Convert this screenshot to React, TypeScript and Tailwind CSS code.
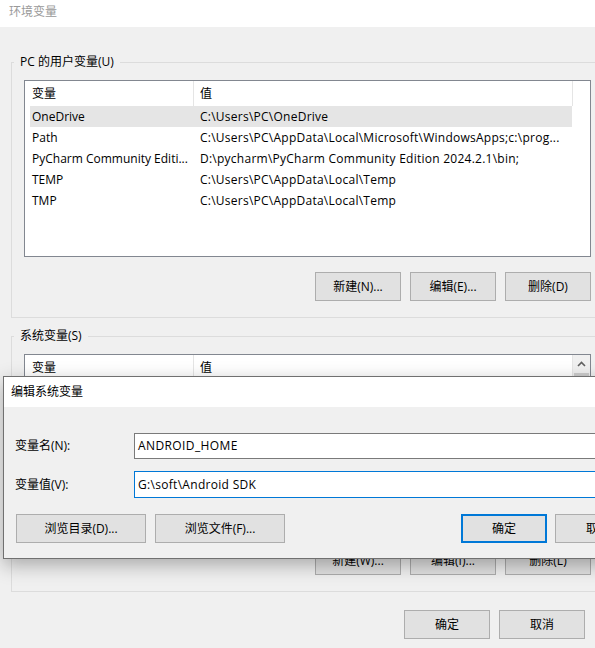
const rows = [
  ["OneDrive", "C:\\Users\\PC\\OneDrive"],
  ["Path", "C:\\Users\\PC\\AppData\\Local\\Microsoft\\WindowsApps;c:\\prog..."],
  ["PyCharm Community Editi...", "D:\\pycharm\\PyCharm Community Edition 2024.2.1\\bin;"],
  ["TEMP", "C:\\Users\\PC\\AppData\\Local\\Temp"],
  ["TMP", "C:\\Users\\PC\\AppData\\Local\\Temp"],
];

const Btn = ({ label, wide = false, focus = false }: { label: string; wide?: boolean; focus?: boolean }) => (
  <div
    className={`flex h-[29px] items-center justify-center bg-[#e1e1e1] text-[12px] text-black ${
      wide ? "w-[130px]" : "w-[86px]"
    } ${focus ? "border-2 border-[#0078d7]" : "border border-[#adadad]"}`}
  >
    {label}
  </div>
);

const Header = () => (
  <div className="flex h-[25px] w-[548px] bg-white text-[12px]">
    <div className="flex w-[169px] items-center border-r border-[#e5e5e5] pl-[7px]">变量</div>
    <div className="flex flex-1 items-center border-r border-[#e5e5e5] pl-[6px]">值</div>
  </div>
);

const App = () => {
  return (
    <div className="relative h-[648px] w-[595px] overflow-hidden bg-[#f0f0f0] font-['Open_Sans','Noto_Sans_CJK_SC',sans-serif] text-[12px] text-black">
      {/* main window */}
      <div className="h-[27px] bg-white pl-[9px] pt-[3px] text-[12px] leading-[18px] text-[#999]">环境变量</div>

      <fieldset className="ml-[11px] mt-[27px] w-[600px] border border-[#dcdcdc]">
        <legend className="ml-[2px] px-[6px] leading-[16px]">PC 的用户变量(U)</legend>
        <div className="pl-[12px] pb-[16px]">
          <div className="mt-[10px] h-[177px] w-[567px] border border-[#828790] bg-white">
            <Header />
            <div className="ml-[5px] w-[542px]">
              {rows.map(([k, v], i) => (
                <div key={k} className={`flex h-[21px] items-center ${i === 0 ? "bg-[#e5e5e5]" : ""}`}>
                  <div className="w-[170px] pl-[2px] whitespace-nowrap">{k}</div>
                  <div className="whitespace-nowrap tracking-[0.25px]">{v}</div>
                </div>
              ))}
            </div>
          </div>
          <div className="mt-[15px] flex w-[567px] justify-end gap-[9px]">
            <Btn label="新建(N)..." />
            <Btn label="编辑(E)..." />
            <Btn label="删除(D)" />
          </div>
        </div>
      </fieldset>

      <fieldset className="ml-[11px] mt-[10px] w-[600px] border border-[#dcdcdc]">
        <legend className="ml-[2px] px-[6px] leading-[16px]">系统变量(S)</legend>
        <div className="pl-[12px] pb-[16px]">
          <div className="mt-[10px] flex h-[177px] w-[567px] border border-[#828790] bg-white">
            <Header />
            <div className="flex w-[17px] flex-col bg-[#f0f0f0]">
              <div className="flex h-[17px] items-center justify-center">
                <svg width="9" height="6" viewBox="0 0 9 6">
                  <path d="M1 5 L4.5 1.5 L8 5" fill="none" stroke="#606060" strokeWidth="1.6" />
                </svg>
              </div>
              <div className="mx-[1px] mt-[1px] h-[40px] bg-[#cdcdcd]" />
            </div>
          </div>
          <div className="mt-[15px] flex w-[567px] justify-end gap-[9px]">
            <Btn label="新建(W)..." />
            <Btn label="编辑(I)..." />
            <Btn label="删除(L)" />
          </div>
        </div>
      </fieldset>

      <div className="mt-[18px] flex justify-end gap-[9px] pr-[10px]">
        <Btn label="确定" />
        <Btn label="取消" />
      </div>

      {/* edit dialog on top */}
      <div className="absolute left-[3px] top-[376px] w-[650px] border border-[#707070] bg-[#f0f0f0] shadow-[0_6px_18px_rgba(0,0,0,0.3)]">
        <div className="flex h-[30px] items-center bg-white pl-[7px]">编辑系统变量</div>
        <div className="px-[11px] pt-[26px] pb-[15px]">
          <div className="flex items-center">
            <div className="w-[119px]">变量名(N):</div>
            <div className="flex h-[26px] flex-1 items-center border border-[#7a7a7a] bg-white pl-[3px] tracking-[0.4px]">ANDROID_HOME</div>
          </div>
          <div className="mt-[12px] flex items-center">
            <div className="w-[119px]">变量值(V):</div>
            <div className="flex h-[27px] flex-1 items-center border border-[#0078d7] bg-white pl-[3px] tracking-[0.3px]">G:\soft\Android SDK</div>
          </div>
          <div className="mt-[16px] flex items-center">
            <div className="ml-[1px] flex gap-[9px]">
              <Btn label="浏览目录(D)..." wide />
              <Btn label="浏览文件(F)..." wide />
            </div>
            <div className="ml-auto flex gap-[8px]">
              <Btn label="确定" focus />
              <Btn label="取消" />
            </div>
          </div>
        </div>
      </div>
    </div>
  );
};

export default App;
